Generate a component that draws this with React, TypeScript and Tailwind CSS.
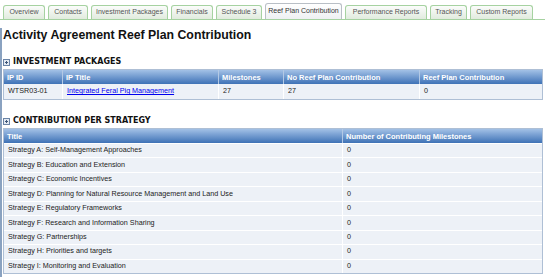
import React from 'react'

const tabs = [
  { label: 'Overview', w: 'w-[42px]' },
  { label: 'Contacts', w: 'w-[40px]' },
  { label: 'Investment Packages', w: 'w-[77px]' },
  { label: 'Financials', w: 'w-[42px]' },
  { label: 'Schedule 3', w: 'w-[46px]' },
  { label: 'Reef Plan Contribution', w: 'w-[77px]', active: true },
  { label: 'Performance Reports', w: 'w-[82px]' },
  { label: 'Tracking', w: 'w-[37px]' },
  { label: 'Custom Reports', w: 'w-[63px]' },
]

const strategies = [
  'Strategy A: Self-Management Approaches',
  'Strategy B: Education and Extension',
  'Strategy C: Economic Incentives',
  'Strategy D: Planning for Natural Resource Management and Land Use',
  'Strategy E: Regulatory Frameworks',
  'Strategy F: Research and Information Sharing',
  'Strategy G: Partnerships',
  'Strategy H: Priorities and targets',
  'Strategy I: Monitoring and Evaluation',
]

function ExpandIcon() {
  return (
    <svg width="7" height="7" viewBox="0 0 7 7" className="shrink-0">
      <rect x="0.5" y="0.5" width="6" height="6" fill="#e4eaf2" stroke="#6b84a6" />
      <path d="M2 3.5h3M3.5 2v3" stroke="#3d5679" strokeWidth="1" />
    </svg>
  )
}

function SectionHeading({ children }: { children: React.ReactNode }) {
  return (
    <div className="flex items-center gap-[3px] h-[10px]">
      <ExpandIcon />
      <span className="font-['DejaVu_Sans',sans-serif] font-bold text-[8px] leading-[10px] text-[#111]">
        {children}
      </span>
    </div>
  )
}

const th =
  'flex items-center pt-[1px] px-[3px] text-white font-bold text-[7.5px] border-r border-[#b3c9e5] last:border-r-0'
const td = 'flex items-center px-[4px] text-[7.2px] text-[#222] border-r border-white last:border-r-0'

export default function App() {
  return (
    <div className="w-[550px] h-[277px] bg-white overflow-hidden font-['Liberation_Sans',Arial,sans-serif]">
      {/* tabs */}
      <div className="flex items-end gap-[3px] pl-[3px] pt-[4px] w-[545px] border-b border-[#a6d2a1] h-[20px]">
        {tabs.map((t) =>
          t.active ? (
            <div
              key={t.label}
              className={`${t.w} h-[16px] flex items-center justify-center rounded-t-[3px] border border-b-0 border-[#b9bfc6] bg-gradient-to-b from-white to-[#eef0f2] text-[7px] text-[#333]`}
            >
              {t.label}
            </div>
          ) : (
            <div
              key={t.label}
              className={`${t.w} h-[14px] flex items-center justify-center rounded-t-[3px] border border-b-0 border-[#a6d2a1] bg-gradient-to-b from-[#fbfcfb] to-[#e1ebde] text-[7px] text-[#555]`}
            >
              {t.label}
            </div>
          )
        )}
      </div>

      {/* body */}
      <div className="border-l-[2px] border-[#8aa2c0] pl-[1px] h-[257px]">
        <h1 className="mt-[8px] text-[12.3px] leading-[15px] font-bold text-[#111]">
          Activity Agreement Reef Plan Contribution
        </h1>

        <div className="mt-[14px]">
          <SectionHeading>INVESTMENT PACKAGES</SectionHeading>
        </div>

        <div className="mt-[2px] w-[540px] border border-[#aebfd5]">
          <div className="grid grid-cols-[59px_156px_65px_136px_1fr] h-[14px] bg-gradient-to-b from-[#a3c1e6] to-[#3e72b6]">
            <div className={th}>IP ID</div>
            <div className={th}>IP Title</div>
            <div className={th}>Milestones</div>
            <div className={th}>No Reef Plan Contribution</div>
            <div className={th}>Reef Plan Contribution</div>
          </div>
          <div className="grid grid-cols-[59px_156px_65px_136px_1fr] h-[15px] bg-[#edf1f7]">
            <div className={td}>WTSR03-01</div>
            <div className={td}>
              <a href="#" className="text-[#0000ee] underline">
                Integrated Feral Pig Management
              </a>
            </div>
            <div className={td}>27</div>
            <div className={td}>27</div>
            <div className={td}>0</div>
          </div>
        </div>

        <div className="mt-[16px]">
          <SectionHeading>CONTRIBUTION PER STRATEGY</SectionHeading>
        </div>

        <div className="mt-[2px] w-[540px] border border-[#aebfd5]">
          <div className="grid grid-cols-[339px_1fr] h-[14px] bg-gradient-to-b from-[#a3c1e6] to-[#3e72b6]">
            <div className={th}>Title</div>
            <div className={th}>Number of Contributing Milestones</div>
          </div>
          {strategies.map((s) => (
            <div
              key={s}
              className="grid grid-cols-[339px_1fr] h-[14.45px] bg-[#edf1f7] border-t border-white"
            >
              <div className={td}>{s}</div>
              <div className={td}>0</div>
            </div>
          ))}
        </div>
      </div>
    </div>
  )
}
